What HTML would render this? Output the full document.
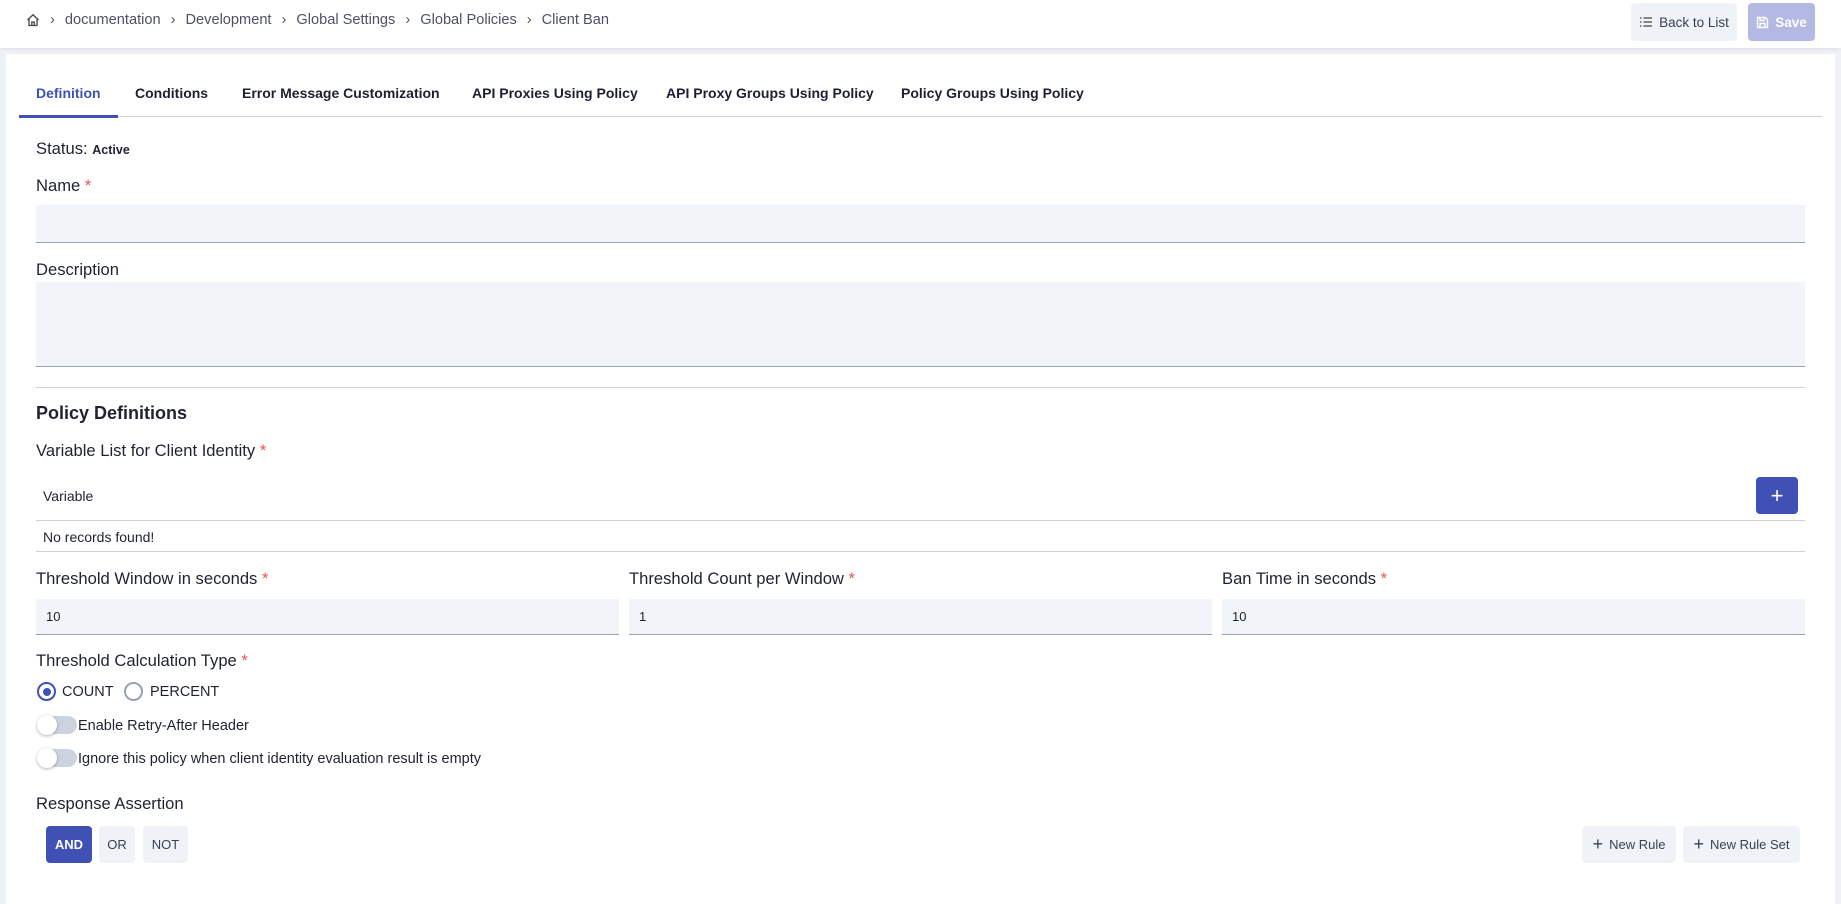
<!DOCTYPE html>
<html><head><meta charset="utf-8"><style>
*{box-sizing:border-box;margin:0;padding:0}
body{width:1841px;height:894px;background:#eef1f5;font-family:"Liberation Sans",Arial,sans-serif;color:#1f2330;position:relative;overflow:hidden}
.a{position:absolute}
.top{left:0;top:0;width:1841px;height:48px;background:#fff;box-shadow:0 1px 4px rgba(0,0,0,.08)}
.bc{top:12px;left:26px;font-size:14.6px;color:#4b5263;display:flex;align-items:center;gap:0;white-space:nowrap}
.bc .s{margin:0 10px;color:#555}
.card{left:6px;top:54px;width:1829px;height:850px;background:#fff}
.tab{top:85px;font-size:14px;font-weight:bold;color:#1d2030;white-space:nowrap}
.lbl{font-size:16.6px;color:#1f2330}
.req{color:#e25555}
.inp{background:#f1f4f8;border-bottom:1px solid #98a1b3}
.btn{border-radius:4px;font-size:13px;display:flex;align-items:center;justify-content:center}
.line{height:1px;background:#c9d2de}
.tog{width:38px;height:18px;border-radius:9px;background:#ccd3de}
.tog::after{content:"";position:absolute;left:-2px;top:-1px;width:20px;height:20px;border-radius:50%;background:#fff;box-shadow:0 1px 3px rgba(0,0,0,.3)}
</style></head><body>
<div class="a top"></div>
<div class="a bc"><svg width="14" height="14" viewBox="0 0 14 14" fill="none" stroke="#444" stroke-width="1.3"><path d="M1.5 7L7 1.8 12.5 7M3 5.8V12.5h8V5.8M5.8 12.5V9h2.4v3.5"/></svg><span class="s">›</span>documentation<span class="s">›</span>Development<span class="s">›</span>Global Settings<span class="s">›</span>Global Policies<span class="s">›</span>Client Ban</div>
<div class="a btn" style="left:1631px;top:3px;width:106px;height:38px;background:#eff2f7;color:#3a4050;font-size:13.5px"><svg width="14" height="12" viewBox="0 0 14 12" stroke="#444" stroke-width="1.3" style="margin-right:6px"><path d="M1 2h1.5M1 6h1.5M1 10h1.5M4.5 2H13M4.5 6H13M4.5 10H13"/></svg>Back to List</div>
<div class="a btn" style="left:1748px;top:3px;width:67px;height:38px;background:#b3b9e2;color:#fff;font-weight:bold;font-size:13.5px"><svg width="13" height="13" viewBox="0 0 13 13" fill="none" stroke="#fff" stroke-width="1.4" style="margin-right:6px"><path d="M1.5 1.5h8l2 2v8h-10zM4 1.5v3h4v-3M4 11.5v-4h5v4"/></svg>Save</div>
<div class="a card"></div>
<div class="a tab" style="left:36px;color:#3f51b5">Definition</div>
<div class="a tab" style="left:135px">Conditions</div>
<div class="a tab" style="left:242px">Error Message Customization</div>
<div class="a tab" style="left:472px">API Proxies Using Policy</div>
<div class="a tab" style="left:666px">API Proxy Groups Using Policy</div>
<div class="a tab" style="left:901px">Policy Groups Using Policy</div>
<div class="a line" style="left:19px;top:116px;width:1803px"></div>
<div class="a" style="left:19px;top:115px;width:99px;height:3px;background:#3f51b5"></div>
<div class="a lbl" style="left:36px;top:139px">Status: <b style="font-size:12.5px">Active</b></div>
<div class="a lbl" style="left:36px;top:176px">Name <span class="req">*</span></div>
<div class="a inp" style="left:36px;top:205px;width:1769px;height:38px"></div>
<div class="a lbl" style="left:36px;top:260px">Description</div>
<div class="a inp" style="left:36px;top:282px;width:1769px;height:85px"></div>
<div class="a line" style="left:36px;top:387px;width:1769px"></div>
<div class="a" style="left:36px;top:403px;font-size:18px;font-weight:bold">Policy Definitions</div>
<div class="a lbl" style="left:36px;top:441px">Variable List for Client Identity <span class="req">*</span></div>
<div class="a" style="left:43px;top:488px;font-size:14px">Variable</div>
<div class="a btn" style="left:1756px;top:477px;width:42px;height:37px;background:#3f51b5;color:#fff;font-size:22px;font-weight:300">+</div>
<div class="a line" style="left:36px;top:520px;width:1769px"></div>
<div class="a" style="left:43px;top:529px;font-size:14px">No records found!</div>
<div class="a line" style="left:36px;top:551px;width:1769px"></div>
<div class="a lbl" style="left:36px;top:569px">Threshold Window in seconds <span class="req">*</span></div>
<div class="a lbl" style="left:629px;top:569px">Threshold Count per Window <span class="req">*</span></div>
<div class="a lbl" style="left:1222px;top:569px">Ban Time in seconds <span class="req">*</span></div>
<div class="a inp" style="left:36px;top:599px;width:583px;height:36px;font-size:13px;padding:10px 10px">10</div>
<div class="a inp" style="left:629px;top:599px;width:583px;height:36px;font-size:13px;padding:10px 10px">1</div>
<div class="a inp" style="left:1222px;top:599px;width:583px;height:36px;font-size:13px;padding:10px 10px">10</div>
<div class="a lbl" style="left:36px;top:651px">Threshold Calculation Type <span class="req">*</span></div>
<div class="a" style="left:37px;top:682px;width:19px;height:19px;border:2px solid #3f51b5;border-radius:50%"><div style="margin:3.5px;width:8px;height:8px;border-radius:50%;background:#3f51b5"></div></div>
<div class="a" style="left:62px;top:684px;font-size:14.5px">COUNT</div>
<div class="a" style="left:124px;top:682px;width:19px;height:19px;border:2px solid #98a1b3;border-radius:50%"></div>
<div class="a" style="left:150px;top:684px;font-size:14.5px">PERCENT</div>
<div class="a tog" style="left:39px;top:716px"></div>
<div class="a" style="left:78px;top:718px;font-size:14.5px">Enable Retry-After Header</div>
<div class="a tog" style="left:39px;top:749px"></div>
<div class="a" style="left:78px;top:751px;font-size:14.5px">Ignore this policy when client identity evaluation result is empty</div>
<div class="a lbl" style="left:36px;top:794px">Response Assertion</div>
<div class="a btn" style="left:46px;top:826px;width:46px;height:37px;background:#3f51b5;color:#fff;font-weight:bold">AND</div>
<div class="a btn" style="left:99px;top:826px;width:36px;height:37px;background:#eff2f7;color:#3a4050">OR</div>
<div class="a btn" style="left:143px;top:826px;width:45px;height:37px;background:#eff2f7;color:#3a4050">NOT</div>
<div class="a btn" style="left:1582px;top:826px;width:94px;height:37px;background:#eff2f7;color:#3a4050"><span style="font-size:18px;font-weight:300;margin-right:6px">+</span>New Rule</div>
<div class="a btn" style="left:1683px;top:826px;width:117px;height:37px;background:#eff2f7;color:#3a4050"><span style="font-size:18px;font-weight:300;margin-right:6px">+</span>New Rule Set</div>
</body></html>
